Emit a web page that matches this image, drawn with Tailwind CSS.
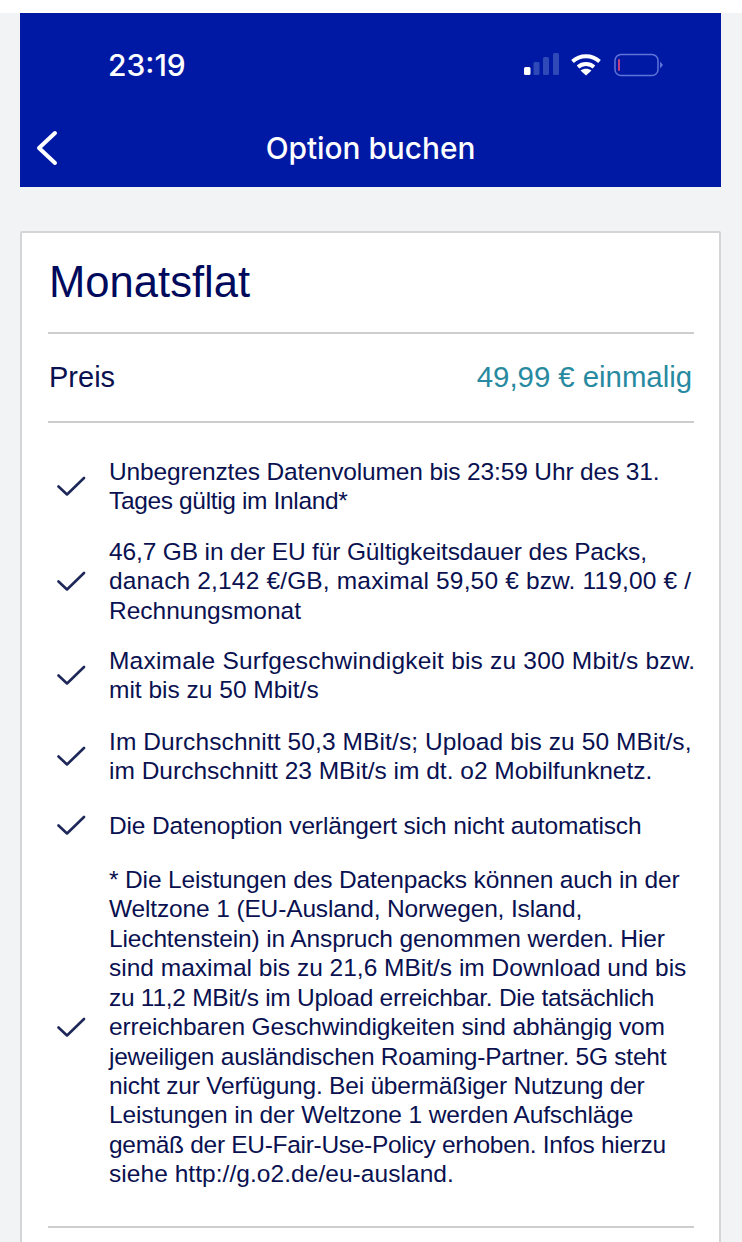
<!doctype html>
<html lang="de">
<head>
<meta charset="utf-8">
<script src="https://cdn.jsdelivr.net/npm/@tailwindcss/browser@4"></script>
</head>
<body class="bg-white">
<div class="h-[1242px] w-[742px] overflow-hidden font-['Liberation_Sans',Arial,sans-serif]">
  <div class="h-[13px] bg-white"></div>
  <div class="h-[1229px] bg-[#f2f3f5] pl-[20px] pr-[21px] flex flex-col w-[742px]">
    <header class="h-[174px] shrink-0 bg-[#0019a5] text-white relative">
      <div class="h-[104px] flex items-center justify-between pl-[88px] pr-[57px]">
        <span class="font-['Inter',sans-serif] text-[30px] font-medium leading-none">23:19</span>
        <div class="flex items-center">
          <svg width="36" height="24" viewBox="0 0 36 24"><rect x="0" y="14" width="6.500" height="8" rx="1.500" fill="#fff"/><rect x="9.500" y="9" width="6" height="13" rx="1.500" fill="#2f49b8"/><rect x="19" y="4" width="6" height="18" rx="1.500" fill="#2f49b8"/><rect x="29" y="0" width="6" height="22" rx="1.500" fill="#2f49b8"/></svg>
          <svg class="ml-[11px]" width="30" height="24" viewBox="0 0 30 24" fill="none" stroke="#fff" stroke-width="3.800"><path d="M1.500 8.500C9 1.500 21 1.500 28.500 8.500"/><path d="M7 14C11.500 10 18.500 10 23 14"/><path d="M15 22.500l-5.500-5c3.200-2.200 7.800-2.200 11 0z" fill="#fff" stroke="none"/></svg>
          <svg width="50" height="24" viewBox="0 0 50 24" class="ml-[13px]" fill="none"><rect x="1" y="1.500" width="43" height="21" rx="6" stroke="#5f74d8" stroke-width="1.500"/><rect x="4" y="6" width="2" height="12" rx="1" fill="#c2407f"/><path d="M46 8.500l3 3.500-3 3.500z" fill="#5f74d8"/></svg>
        </div>
      </div>
      <svg class="absolute left-[16px] top-[117px]" width="24" height="36" viewBox="0 0 24 36" fill="none" stroke="#fff" stroke-width="4" stroke-linecap="round" stroke-linejoin="round"><path d="M19 3L3 18l16 15"/></svg>
      <h1 class="absolute left-0 right-0 top-[116px] text-center font-['Inter',sans-serif] text-[29.800px] font-medium leading-[38px]">Option buchen</h1>
    </header>
    <main class="mt-[44px] bg-white border-2 border-[#d3d5d8] rounded-[2px] pl-[26px] pr-[25px] text-[#0a1150] grow -mb-[20px]">
      <h2 class="h-[101px] pt-[24px] pl-px text-[43.600px] leading-[50px] border-b-2 border-[#cbcdcf] text-[#000a5c]">Monatsflat</h2>
      <div class="h-[89px] flex items-center justify-between border-b-2 border-[#cbcdcf] pl-px pr-[2px]">
        <span class="text-[29px]">Preis</span>
        <span class="text-[29.400px] tracking-[-0.03px] text-[#288aa0]">49,99 € einmalig</span>
      </div>
      <ul class="pt-[34px] pb-[37px] flex flex-col gap-[21px] border-b-2 border-[#cbcdcf] text-[24.500px] leading-[29.400px] tracking-[-0.14px] whitespace-nowrap">
        <li class="flex items-center gap-[23px] pl-[9px]">
          <svg class="shrink-0" width="29" height="20" viewBox="0 0 29 20" fill="none" stroke="#1e2858" stroke-width="2.600" stroke-linecap="round" stroke-linejoin="round"><path d="M1.500 10.500L10 18.500 27 2"/></svg>
          <p>Unbegrenztes Datenvolumen bis 23:59 Uhr des 31.<br><span class="tracking-[-0.35px]">Tages gültig im Inland*</span></p>
        </li>
        <li class="flex items-center gap-[23px] pl-[9px]">
          <svg class="shrink-0" width="29" height="20" viewBox="0 0 29 20" fill="none" stroke="#1e2858" stroke-width="2.600" stroke-linecap="round" stroke-linejoin="round"><path d="M1.500 10.500L10 18.500 27 2"/></svg>
          <p>46,7 GB in der EU für Gültigkeitsdauer des Packs,<br><span class="tracking-[0.16px]">danach 2,142 €/GB, maximal 59,50 € bzw. 119,00 € /</span><br><span class="tracking-normal">Rechnungsmonat</span></p>
        </li>
        <li class="flex items-center gap-[23px] pl-[9px]">
          <svg class="shrink-0" width="29" height="20" viewBox="0 0 29 20" fill="none" stroke="#1e2858" stroke-width="2.600" stroke-linecap="round" stroke-linejoin="round"><path d="M1.500 10.500L10 18.500 27 2"/></svg>
          <p><span class="tracking-[0.2px]">Maximale Surfgeschwindigkeit bis zu 300 Mbit/s bzw.</span><br><span class="tracking-normal">mit bis zu 50 Mbit/s</span></p>
        </li>
        <li class="flex items-center gap-[23px] pl-[9px] translate-y-px">
          <svg class="shrink-0" width="29" height="20" viewBox="0 0 29 20" fill="none" stroke="#1e2858" stroke-width="2.600" stroke-linecap="round" stroke-linejoin="round"><path d="M1.500 10.500L10 18.500 27 2"/></svg>
          <p><span class="tracking-[0.1px]">Im Durchschnitt 50,3 MBit/s; Upload bis zu 50 MBit/s,</span><br><span class="tracking-normal">im Durchschnitt 23 MBit/s im dt. o2 Mobilfunknetz.</span></p>
        </li>
        <li class="flex items-center gap-[23px] pl-[9px] mt-[5px] mb-[4px]">
          <svg class="shrink-0" width="29" height="20" viewBox="0 0 29 20" fill="none" stroke="#1e2858" stroke-width="2.600" stroke-linecap="round" stroke-linejoin="round"><path d="M1.500 10.500L10 18.500 27 2"/></svg>
          <p>Die Datenoption verlängert sich nicht automatisch</p>
        </li>
        <li class="flex items-center gap-[23px] pl-[9px]">
          <svg class="shrink-0" width="29" height="20" viewBox="0 0 29 20" fill="none" stroke="#1e2858" stroke-width="2.600" stroke-linecap="round" stroke-linejoin="round"><path d="M1.500 10.500L10 18.500 27 2"/></svg>
          <p>* Die Leistungen des Datenpacks können auch in der<br>Weltzone 1 (EU-Ausland, Norwegen, Island,<br>Liechtenstein) in Anspruch genommen werden. Hier<br><span class="tracking-normal">sind maximal bis zu 21,6 MBit/s im Download und bis</span><br><span class="tracking-[-0.27px]">zu 11,2 MBit/s im Upload erreichbar. Die tatsächlich</span><br>erreichbaren Geschwindigkeiten sind abhängig vom<br><span class="tracking-[-0.24px]">jeweiligen ausländischen Roaming-Partner. 5G steht</span><br><span class="tracking-[-0.22px]">nicht zur Verfügung. Bei übermäßiger Nutzung der</span><br>Leistungen in der Weltzone 1 werden Aufschläge<br><span class="tracking-[-0.3px]">gemäß der EU-Fair-Use-Policy erhoben. Infos hierzu</span><br><span class="tracking-[0.05px]">siehe http://g.o2.de/eu-ausland.</span></p>
        </li>
      </ul>
    </main>
  </div>
</div>
</body>
</html>
